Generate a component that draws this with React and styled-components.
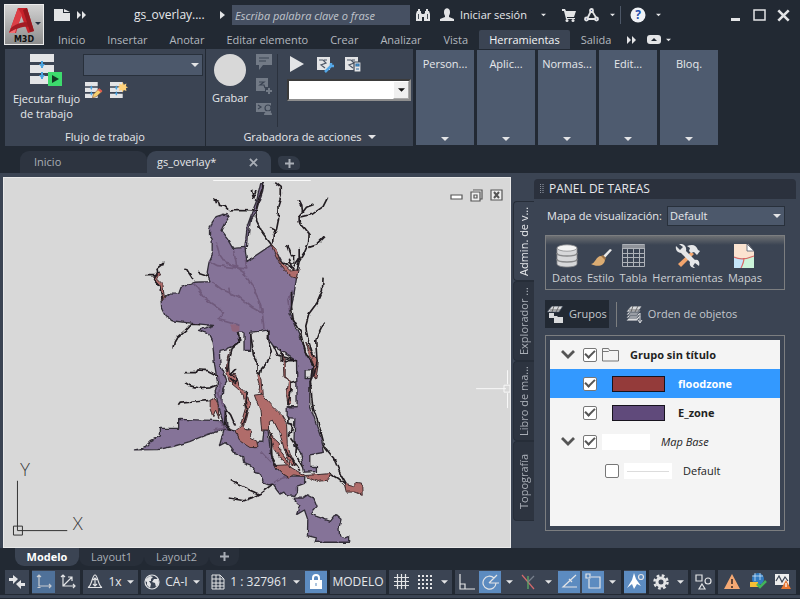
import React, { useState } from 'react';
import styled, { createGlobalStyle, css } from 'styled-components';

const GlobalStyle = createGlobalStyle`
  * {
    box-sizing: border-box;
  }
  body {
    margin: 0;
    background: #222933;
    color: #e6e8eb;
    font-family: 'Open Sans', 'Noto Sans', sans-serif;
    font-size: 11px;
    line-height: 16px;
  }
  button, input, select {
    font: inherit;
    color: inherit;
  }
  button {
    border: 0;
    padding: 0;
    background: none;
    cursor: pointer;
  }
  svg {
    display: block;
    flex: none;
  }
`;

const Window = styled.div`
  min-height: 100vh;
  display: flex;
  flex-direction: column;
`;

/* ---------- header ---------- */

const Header = styled.header`
  display: flex;
  height: 49px;
  padding-left: 4px;
`;

const AppButton = styled.button`
  width: 40px;
  height: 41px;
  margin-top: 4px;
  border: 1px solid #ececec;
  background: linear-gradient(#d2d2d2, #8d8d8d);
`;

const HeaderRows = styled.div`
  flex: 1;
  min-width: 0;
`;

const TitleBar = styled.div`
  display: flex;
  align-items: center;
  height: 30px;
  padding: 0 7px 0 8px;
`;

const IconButton = styled.button`
  display: flex;
  align-items: center;
  justify-content: center;
  height: 20px;
  min-width: ${(p) => p.$width || 20}px;
`;

const FileName = styled.span`
  width: 68px;
  margin: 0 10px 0 42px;
  font-size: 12px;
  white-space: nowrap;
`;

const Search = styled.input`
  width: 178px;
  height: 20px;
  padding: 0 3px;
  border: 0;
  background: #465062;
  font-style: italic;

  &::placeholder {
    color: #c0c5cc;
  }
`;

const SignIn = styled.button`
  display: flex;
  align-items: center;
  gap: 6px;
  margin-left: 4px;
  white-space: nowrap;
`;

const Divider = styled.span`
  width: 1px;
  height: ${(p) => p.$height || 18}px;
  background: ${(p) => p.$color || '#4d5767'};
`;

const WindowButtons = styled.div`
  display: flex;
  gap: 4px;
  margin-left: auto;
`;

const RibbonTabs = styled.nav`
  display: flex;
  align-items: center;
  height: 19px;
  padding-left: 3px;
`;

const RibbonTab = styled.button`
  height: 19px;
  padding: 0 11px;
  white-space: nowrap;
  color: #b3b8bf;

  ${(p) => p.$active && css`
    padding: 0 10px;
    border-radius: 2px 2px 0 0;
    background: #3b4453;
    color: #f4f5f6;
  `}
`;

/* ---------- ribbon ---------- */

const Ribbon = styled.div`
  display: flex;
  height: 97px;
  padding-left: 5px;
`;

const RibbonPanel = styled.section`
  display: flex;
  flex-direction: column;
  width: ${(p) => p.$width}px;
  margin-right: 1px;
  background: #3b4453;
`;

const PanelBody = styled.div`
  flex: 1;
  display: flex;
  padding: 5px 2px 0 5px;
`;

const PanelTitle = styled.div`
  display: flex;
  align-items: center;
  justify-content: center;
  gap: 6px;
  height: 19px;
`;

const BigButton = styled.button`
  display: flex;
  flex-direction: column;
  align-items: center;
  gap: 4px;
  width: ${(p) => p.$width}px;
  line-height: 15px;
`;

const Stack = styled.div`
  display: flex;
  flex-direction: column;
  gap: 5px;
`;

const MacroTools = styled(Stack)`
  margin-left: 9px;
`;

const Row = styled.div`
  display: flex;
  align-items: center;
  gap: ${(p) => p.$gap || 4}px;
`;

const SelectWrap = styled.label`
  display: flex;
  align-items: center;
  width: ${(p) => p.$width}px;
  height: ${(p) => p.$height || 22}px;
  border: 1px solid #28303b;
  background: #4c586b;

  ${(p) => p.$light && css`
    border: 2px inset #8f8f8f;
    background: #fff;
    color: #111;
  `}

  select {
    flex: 1;
    height: 100%;
    min-width: 0;
    padding: 0 2px;
    border: 0;
    appearance: none;
    background: transparent;
  }

  svg {
    margin-right: 3px;
  }
`;

const ComboArrow = styled.span`
  display: flex;
  align-items: center;
  justify-content: center;
  width: 16px;
  height: 100%;
  border: 1px outset #fff;
  background: #f0f0f0;

  svg {
    margin: 0;
  }
`;

const SideTools = styled.div`
  display: flex;
  flex-direction: column;
  align-items: flex-start;
  gap: 8px;
  width: 29px;
  height: 73px;
  padding-left: 7px;
  border-right: 1px solid #2b323e;
`;

const CollapsedPanel = styled.button`
  display: flex;
  flex-direction: column;
  align-items: center;
  justify-content: space-between;
  width: 58px;
  margin: 1px 1px 1px 2px;
  padding: 6px 0 4px;
  background: #4e5b6f;
`;

/* ---------- document tabs ---------- */

const DocTabs = styled.div`
  display: flex;
  align-items: flex-end;
  height: 31px;
  padding-left: 20px;
  border-bottom: 4px solid #3b4453;
`;

const DocTab = styled.div`
  display: flex;
  align-items: center;
  justify-content: space-between;
  width: ${(p) => p.$width}px;
  height: 22px;
  padding: 0 13px 0 ${(p) => (p.$active ? 10 : 14)}px;
  border-radius: 9px 9px 0 0;
  background: ${(p) => (p.$active ? '#3b4453' : '#2d3440')};
  color: ${(p) => (p.$active ? '#e6e8eb' : '#a9aeb6')};
`;

const NewTab = styled.button`
  display: flex;
  align-items: center;
  justify-content: center;
  width: 22px;
  height: 14px;
  margin: 0 0 3px 7px;
  border-radius: 4px 8px 4px 8px;
  background: #323a47;
`;

/* ---------- drawing area ---------- */

const Workspace = styled.main`
  flex: 1;
  display: flex;
  min-height: 370px;
  padding-left: 3px;
  background: #3b4453;
`;

const Drawing = styled.div`
  flex: 1;
  min-width: 0;
  position: relative;
  border: 1px solid #e9e9e9;
  background: #d8d8d8;

  > svg {
    width: 100%;
    height: 100%;
  }
`;

const DrawingButtons = styled.div`
  position: absolute;
  top: 7px;
  right: 4px;
  display: flex;
`;

/* ---------- task panel ---------- */

const Palette = styled.aside`
  display: flex;
  width: 289px;
  padding: 2px 4px 0 2px;
`;

const SideTabs = styled.div`
  display: flex;
  flex-direction: column;
  width: 21px;
  padding-top: 22px;
`;

const SideTab = styled.button`
  height: 80px;
  border: 1px solid #262d38;
  border-left-width: 0;
  border-radius: 0 4px 4px 0;
  background: ${(p) => (p.$active ? '#3b4453' : '#2d3440')};
  color: ${(p) => (p.$active ? '#e6e8eb' : '#a9aeb6')};
  line-height: 18px;
  writing-mode: vertical-rl;
  transform: rotate(180deg);
  white-space: nowrap;
`;

const PaletteMain = styled.div`
  flex: 1;
  min-width: 0;
`;

const PaletteTitle = styled.h2`
  display: flex;
  align-items: center;
  gap: 5px;
  height: 20px;
  margin: 0;
  padding-left: 6px;
  border-radius: 4px 4px 0 0;
  background: #2b313d;
  font-size: 12px;
  font-weight: 400;
`;

const PaletteBody = styled.div`
  display: flex;
  flex-direction: column;
  padding: 7px 11px 0;
`;

const MapField = styled.div`
  display: flex;
  align-items: center;
  justify-content: space-between;
  padding-left: 2px;
  white-space: nowrap;
`;

const ToolBox = styled.div`
  display: flex;
  justify-content: space-between;
  height: 55px;
  margin-top: 9px;
  padding: 8px 22px 0 6px;
  border: 1px solid #7c7e80;
  background: linear-gradient(#6d7073, #3b4453 9px);
`;

const Tool = styled.button`
  display: flex;
  flex-direction: column;
  align-items: center;
  gap: 2px;
  color: #cdd0d4;
`;

const ModeRow = styled.div`
  display: flex;
  align-items: center;
  gap: 7px;
  height: 28px;
  margin-top: 10px;
`;

const ModeButton = styled.button`
  display: flex;
  align-items: center;
  gap: 5px;
  height: 28px;
  padding: 0 2px;
  background: ${(p) => (p.$active ? '#222933' : 'transparent')};
  color: #c4c8cd;
  white-space: nowrap;
`;

const LayerFrame = styled.div`
  height: 196px;
  margin-top: 7px;
  padding: 4px;
  border: 1px solid #7c7e80;
`;

const LayerList = styled.ul`
  height: 100%;
  margin: 0;
  padding: 0;
  list-style: none;
  background: #f4f4f4;
  color: #222;
`;

const LayerItem = styled.li`
  display: flex;
  align-items: center;
  height: 29px;
  padding-left: ${(p) => p.$indent || 11}px;
  background: ${(p) => (p.$selected ? '#3399ff' : 'transparent')};
  color: ${(p) => (p.$selected ? '#fff' : '#222')};

  label {
    margin-left: ${(p) => p.$gap || 11}px;
    font-weight: ${(p) => (p.$bold ? 700 : 400)};
    font-style: ${(p) => (p.$italic ? 'italic' : 'normal')};
  }
`;

const Check = styled.input`
  appearance: none;
  display: grid;
  place-items: center;
  flex: none;
  width: 14px;
  height: 14px;
  margin: 0;
  border: 1px solid #777;
  border-radius: 2px;
  background: #fff;

  &:checked::after {
    content: '';
    width: 8px;
    height: 4px;
    margin-bottom: 3px;
    border: solid #555;
    border-width: 0 0 2px 2px;
    transform: rotate(-45deg);
  }
`;

const Twisty = styled.button`
  display: flex;
  width: 22px;
`;

const Folder = styled.span`
  margin-left: 5px;
`;

const Swatch = styled.span`
  width: ${(p) => p.$width || 53}px;
  height: 16px;
  margin-left: ${(p) => p.$offset || 15}px;
  border: ${(p) => (p.$plain ? '0' : '1px solid #17131d')};
  background: ${(p) => p.$color};
`;

const LineSample = styled.hr`
  width: 42px;
  margin: 8px auto;
  border: 0;
  border-top: 1px solid #dcdcdc;
`;

/* ---------- bottom bars ---------- */

const LayoutTabs = styled.div`
  display: flex;
  align-items: flex-start;
  height: 22px;
  padding-left: 15px;
`;

const LayoutTab = styled.button`
  display: flex;
  align-items: center;
  justify-content: center;
  height: 18px;
  width: ${(p) => p.$width}px;
  border-radius: 0 0 9px 9px;
  background: ${(p) => (p.$active ? '#3b4453' : '#282f3a')};
  color: ${(p) => (p.$active ? '#fff' : '#a9aeb6')};
  font-weight: ${(p) => (p.$active ? 700 : 400)};
`;

const StatusBar = styled.footer`
  display: flex;
  gap: 3px;
  height: 30px;
  padding: 0 4px 6px 5px;
  background: linear-gradient(#222933 25px, #3b4453 25px, #3b4453 28px, #222933 28px);
`;

const StatusGroup = styled.div`
  display: flex;
  align-items: center;
  height: 24px;
  background: #3b4453;
  ${(p) => p.$last && 'flex: 1;'}
`;

const StatusButton = styled.button`
  display: flex;
  flex: none;
  align-items: center;
  justify-content: center;
  gap: 5px;
  height: 22px;
  width: ${(p) => p.$width || 24}px;
  margin-left: ${(p) => (p.$spaced ? 2 : 0)}px;
  background: ${(p) => (p.$on ? '#5c8bc0' : p.$dim ? '#4f7199' : 'transparent')};
  font-size: 12px;
  white-space: nowrap;
`;

/* ---------- icons ---------- */

const light = '#e3e4e6';

const Svg = ({ w = 16, h = w, vb, children, ...rest }) => (
  <svg
    width={w}
    height={h}
    viewBox={vb || `0 0 ${w} ${h}`}
    fill="none"
    stroke={light}
    strokeWidth="1.2"
    aria-hidden="true"
    {...rest}
  >
    {children}
  </svg>
);

const Caret = ({ w = 7, color = light }) => (
  <Svg w={w} h={4} vb="0 0 8 4" stroke="none">
    <path d="M0 0h8L4 4z" fill={color} />
  </Svg>
);

const DoubleArrow = () => (
  <Svg w={10} h={8} stroke="none" fill={light}>
    <path d="M0 0l4 4-4 4zM5 0l4 4-4 4z" />
  </Svg>
);

const Plus = () => (
  <Svg w={9} stroke="#a9aeb6" strokeWidth="2"><path d="M4.5 0v9M0 4.5h9" /></Svg>
);

const LogoIcon = () => (
  <svg width="38" height="39" viewBox="0 0 38 39">
    <path d="M4 28L13 3h9l7 23-6 2-7-18-5 18z" fill="#c8222b" />
    <path d="M13 3l4 7-7 18-6 0z" fill="#dc3f46" />
    <path d="M4 28c9-6 16-7 22-6l-1-4c-7-2-14 1-19 5z" fill="#a31c24" />
    <path d="M18 5l4-2 7 23-4 1z" fill="#98181f" />
    <path d="M5 27l6-3-1 4-6 0z" fill="#f07073" />
    <path d="M30 17h6l-3 3z" fill="#243040" />
    <text x="19" y="37" textAnchor="middle" fontSize="8" fontWeight="700" fontFamily="DejaVu Sans, sans-serif" fill="#111">M3D</text>
  </svg>
);

const NewDocIcon = () => (
  <Svg w={17} h={13} stroke="none" fill={light}>
    <path d="M0 0h9v4h7v8H0z" /><path d="M10 0l6 3h-6z" />
  </Svg>
);

const BinocularsIcon = () => (
  <Svg w={16} h={14} stroke="none" fill={light}>
    <path d="M2 3h4v2l1 1v7H1V6zM10 3h4l1 3v7H9V6l1-1zM7 6h2v3H7z" />
    <path d="M3 1h2v2H3zM11 1h2v2h-2z" />
    <path d="M3.500 6v5M12.500 6v5" stroke="#222933" strokeWidth=".8" />
  </Svg>
);

const UserIcon = () => (
  <Svg w={14} stroke="none" fill={light}>
    <path d="M4 4c0-5 6-5 6 0 0 3-1 3-1 4v1l5 2v2H0v-2l5-2V8C5 7 4 7 4 4z" />
  </Svg>
);

const CartIcon = () => (
  <Svg w={15} h={14} stroke="none" fill={light}>
    <path d="M0 1h3l1 2h10l-2 6H5v1h8v1H4L2 3H0z" />
    <circle cx="5" cy="12.500" r="1.500" /><circle cx="11" cy="12.500" r="1.500" />
  </Svg>
);

const ExchangeIcon = () => (
  <Svg w={15} h={14} strokeWidth="1.800">
    <path d="M7.500 2L3 11h10z" />
    <circle cx="7.500" cy="2.500" r="1.500" fill="#3e4c91" />
    <circle cx="2.500" cy="11" r="1.500" fill="#3e4c91" />
    <circle cx="12.500" cy="11" r="1.500" fill="#3e4c91" />
  </Svg>
);

const HelpIcon = () => (
  <svg width="16" height="16" viewBox="0 0 16 16">
    <circle cx="8" cy="8" r="7.500" fill="#f0f2f6" />
    <text x="8" y="12" textAnchor="middle" fontSize="12" fontWeight="700" fill="#1f4fb0">?</text>
  </svg>
);

const Bars = ({ fill = light }) => (
  <>
    <g fill={fill} stroke="none"><path d="M0 0h24v8H0zM0 11h24v8H0zM0 22h24v8H0z" /></g>
    <path d="M12 7v7M12 18v7" stroke="#4aa3df" strokeWidth="2" />
    <path d="M9 10h6l-3 4zM9 21h6l-3 4z" fill="#4aa3df" stroke="none" />
  </>
);

const WorkflowIcon = () => (
  <Svg w={33} h={33}>
    <Bars />
    <path d="M18 18h14v14H18z" fill="#3ddc6d" stroke="none" />
    <path d="M22 21l7 4-7 4z" fill="#123b25" stroke="none" />
  </Svg>
);

const WorkflowEditIcon = () => (
  <Svg w={18} h={18} vb="0 0 34 34">
    <Bars />
    <path d="M14 30l2-7 10-10 6 5-11 10z" fill="#f4cf6f" stroke="#8a5a3b" />
    <path d="M24 15l3-3 6 5-3 3z" fill="#e25d4e" stroke="none" />
  </Svg>
);

const WorkflowNewIcon = () => (
  <Svg w={18} h={18} vb="0 0 34 34">
    <Bars />
    <path d="M24 0l2 5 5-2-1 5 4 2-4 2 1 5-5-2-2 5-2-5-5 2 1-5-4-2 4-2-1-5 5 2z" fill="#ffd27a" stroke="none" />
  </Svg>
);

const RecordIcon = () => (
  <Svg w={32} stroke="none"><circle cx="16" cy="16" r="16" fill="#d8d8d8" /></Svg>
);

const MessageIcon = () => (
  <Svg w={17} h={16} stroke="none" fill="#727a86">
    <path d="M0 0h16v11H7l-4 5v-5H0z" /><path d="M3 4h10M3 7h7" stroke="#3b4453" />
  </Svg>
);

const ScriptAddIcon = () => (
  <Svg w={17} stroke="none" fill="#727a86">
    <path d="M0 0h12v9h-3v4H0zM10 12h6v2h-6z" /><path d="M12 10h2v6h-2z" />
    <path d="M3 4h5l-4 3h4l1 3" stroke="#3b4453" />
  </Svg>
);

const UserInputIcon = () => (
  <Svg w={17} h={12} stroke="none" fill="#727a86">
    <path d="M0 0h15v9H0z" /><path d="M2 2l3 2-3 2" stroke="#3b4453" />
    <circle cx="12" cy="5" r="3" stroke="#3b4453" /><path d="M8 12c0-5 8-5 8 0z" />
  </Svg>
);

const PlayIcon = () => (
  <Svg w={15} h={16} stroke="none"><path d="M0 0l14 8-14 8z" fill={light} /></Svg>
);

const ScriptIcon = ({ tool }) => (
  <Svg w={17} h={17}>
    <path d="M0 1h13v13H0z" fill={light} stroke="none" />
    <path d="M2 4h4l3 3-5 2 4 3M7 4h3" stroke="#4d5767" />
    {tool === 'wrench' ? (
      <path d="M8 16l6-6m0-3v3h3" stroke="#55a8e8" strokeWidth="2.500" />
    ) : (
      <>
        <path d="M9 6h7v10H9z" fill={light} stroke="#3b4453" />
        <path d="M11 8h3v2h-3zM11 13h3" fill="#4aa3df" stroke="#356fa3" />
      </>
    )}
  </Svg>
);

const DatabaseIcon = () => (
  <Svg w={22} h={24} stroke="#88898b" strokeWidth=".8">
    <path d="M1 4v16c0 4 20 4 20 0V4z" fill="#d7d8da" />
    <ellipse cx="11" cy="4" rx="10" ry="3.200" fill="#f4f4f4" />
    <path d="M1 9c0 4 20 4 20 0M1 15c0 4 20 4 20 0" strokeWidth="1.500" />
  </Svg>
);

const BrushIcon = () => (
  <Svg w={22} h={24} stroke="none">
    <path d="M12 13l8-8 2 1-8 9z" fill="#e9e9e9" />
    <path d="M1 20c5-1 5-9 11-8l3 3c0 8-9 8-14 5z" fill="#dbac72" />
    <path d="M11 12l2-1 3 3-1 2z" fill="#9b7347" />
  </Svg>
);

const TableIcon = () => (
  <Svg w={23} h={24} stroke="#aeb2b8" strokeWidth="1">
    <path d="M.5.5h22v22H.5z" /><path d="M0 1h23v3H0z" fill="#8e9299" stroke="none" />
    <path d="M0 4.500h23M0 9.500h23M0 13.500h23M0 18.500h23M5.500 5v18M11.500 5v18M17.500 5v18" />
  </Svg>
);

const ToolsIcon = () => (
  <Svg w={26} h={24} stroke="none">
    <path d="M3 20L16 8l3 2L6 23z" fill="#f3a56d" />
    <path d="M12 2c6-2 9-1 11 4l2 1-3 4-3-3-3 1-2-2 1-3z" fill="#e5e6e8" />
    <path d="M1 2l4 4 3-3-4-3c5-1 8 3 7 7l9 9c4-1 5 3 4 6l-4-3-2 3 2 2c-4 0-6-3-5-6l-9-9C3 9 0 6 1 2z" fill="#e5e6e8" />
  </Svg>
);

const MapsIcon = () => (
  <Svg w={21} h={24} stroke="none">
    <path d="M0 0h14l6 7v17H0z" fill="#fbe3d0" />
    <path d="M0 14h9v10H0z" fill="#c4e5fa" /><path d="M11 14l9-1v11H8z" fill="#ccf4d9" />
    <path d="M0 13c6 3 13 2 20-1M10 14c0 4-1 6-3 10" stroke="#d76a66" fill="none" />
    <path d="M13 0l7 7h-7z" fill="#fff" stroke="#4d5767" strokeWidth=".8" />
  </Svg>
);

const LayersIcon = ({ variant }) => (
  <Svg w={17} h={17} stroke="#3b4453" strokeWidth=".8" fill="#d9dadc">
    {variant === 'order' && <path d="M0 15l4-5h11l-4 5zM0 12l4-5h11l-4 5zM0 9l4-5h11l-4 5z" />}
    <path d="M0 6l5-6h11l-4 6z" />
    <path d="M3 4h10M7 0L5 6M12 0l-3 6" stroke="#555" />
    {variant === 'order' ? (
      <path d="M14 7v9M12 14l2 3 2-3" stroke="#fff" fill="none" />
    ) : (
      <path d="M2 7h5v3h3l1 1h5v6H7v-5H2z" stroke="none" />
    )}
  </Svg>
);

const Chevron = () => (
  <Svg w={14} h={9} stroke="#555" strokeWidth="2.800"><path d="M1 1l6 6 6-6" /></Svg>
);

const FolderIcon = () => (
  <Svg w={17} h={14} stroke="#777" strokeWidth="1">
    <path d="M.5 13V.5h6l1 2h9V13zM.5 3.500h6l1-1" />
  </Svg>
);

const Close = ({ w = 9, color = light }) => (
  <Svg w={w} vb="0 0 10 10" stroke={color} strokeWidth="2"><path d="M1 1l8 8M9 1L1 9" /></Svg>
);

/* ---------- map ---------- */

// map coordinates are three units per drawing pixel
const zones = [
  'M300 120L282 115L258 122L246 140L238 162L238 178L246 190L246 240L236 262L231 290L240 318L190 320L152 336L145 355L115 356L92 374L94 400L104 420L125 436L180 443L250 450L205 465L235 475L246 498L250 530L252 560L257 590L262 620L255 650L264 690L276 730L282 762L292 762L285 700L275 680L278 640L290 620L280 590L270 570L268 540L270 525L292 520L322 508L330 495L324 470L342 470L342 525L362 525L362 470L390 468L412 464L416 492L430 512L500 557L502 695L472 695L472 728L495 730L492 810L512 830L524 892L560 890L560 875L540 875L540 840L584 832L574 790L554 730L540 690L540 620L550 600L548 560L530 540L518 500L496 450L480 410L490 370L500 308L462 272L440 230L425 207L350 258L345 215L308 218L292 190L272 165L284 142Z',
  'M12 825L40 820L62 797L90 783L90 760L145 760L145 733L275 737L284 762L220 783L178 800L130 814L82 824Z',
  'M282 762L318 768L332 796L372 818L384 802L398 802L402 764L414 766L422 835L438 878L470 904L525 904L524 926L500 935L500 952L492 965L470 963L462 952L450 958L440 945L428 928L416 930L400 924L396 910L390 896L370 892L372 880L360 870L340 862L338 846L325 836L312 832L300 815L285 803L268 812Z',
  'M490 970L520 970L534 960L552 970L562 995L542 1018L560 1025L602 1040L618 1020L634 1034L628 1060L630 1084L650 1090L660 1085L660 1103L556 1103L560 1090L533 1083L534 1035L524 1006L500 1020L510 990Z',
  'M392 20L402 20L398 45L388 75L378 108L362 130L356 165L352 215L344 215L352 150L368 105L378 80Z',
];

const floods = [
  'M423 206L438 220L450 256L482 286L508 282L502 308L488 304L462 282L444 252L432 228Z',
  'M92 296L76 292L68 312L88 330L94 372L102 370L98 330L78 310Z',
  'M300 522L294 550L298 592L320 596L326 632L352 660L360 690L350 730L342 755L332 748L346 700L340 660L322 640L298 620L288 590L292 545Z',
  'M340 748L318 770L332 800L360 818L384 818L380 798L362 790L362 764L346 765Z',
  'M373 660L395 657L420 685L455 720L470 745L472 805L482 838L500 875L480 865L462 820L450 775L430 735L415 740L416 765L395 765L390 705Z',
  'M418 768L432 790L448 805L450 830L470 855L484 880L455 855L430 820Z',
  'M434 872L470 870L504 890L526 902L560 900L606 896L592 916L562 920L530 906L490 900L478 908L456 895Z',
  'M644 928L670 935L682 923L696 925L698 962L676 952L650 952Z',
  'M452 535L460 560L462 600L476 620L470 660L474 690L482 688L482 622L466 600L466 550Z',
  'M528 500L540 540L552 570L550 600L558 612L566 560L546 530Z',
  'M240 672L252 668L264 690L266 728L256 705L248 725L240 702Z',
  'M384 590L396 612L400 660L386 652L390 625L384 605Z',
];

const rivers = [
  'M378 105L320 104L298 105L285 92L265 88L262 76L252 72L256 82',
  'M398 20L398 36L386 66L378 105L380 135L398 172L424 206',
  'M364 42L370 66L378 45',
  'M436 20L454 34L454 60L444 92L446 130L440 160L430 180L428 205M430 180L436 160L420 152',
  'M508 72L516 88L518 110L508 122L508 138L526 158L538 174L536 202L522 235L508 258L502 285M518 110L530 94L552 86M508 124L548 115L580 92L594 64M538 215L560 208L584 184M508 216L508 250L492 272',
  'M470 208L482 240L494 240L494 262L478 262L476 248L484 270L492 282L470 265L455 262',
  'M100 262L80 278L82 292L70 312L88 335L96 370M45 300L82 300M100 262L96 270',
  'M166 276L176 292L188 310M204 290L222 296L234 302',
  'M182 446L164 466L140 486L132 500L128 520M182 446L210 448',
  'M580 306L578 345L562 382L538 414L528 452L534 490L552 545',
  'M584 438L566 474L558 496L562 560L552 600',
  'M485 345L485 395L490 430L512 468L526 528L550 570L542 620L548 690L570 758L586 818L612 850L634 902L650 930',
  'M600 896L625 912L646 930',
  'M164 592L195 592L200 584L232 586L260 600M164 622L180 632L214 640L240 638L258 630M144 692L150 684L200 680L240 676',
  'M300 916L324 930L350 942L386 958M296 970L342 978L368 968L394 954L428 928',
  'M322 470L328 500L306 520L298 550L292 590M362 475L370 536L382 560L380 592L390 600L395 580L412 562L424 528L412 490L414 465',
  'M430 512L444 540L500 556M454 520L454 560M502 556L464 556',
  'M318 580L302 595L324 608L316 625L300 608',
  'M286 700L302 720L316 752M286 705L284 745L300 764L312 768',
  'M352 650L346 690L354 705L340 748M346 762L358 762',
  'M422 775L426 845L440 872M466 822L480 845L510 888',
  'M474 728L474 745L488 748L486 770L474 785M482 790L500 815L498 840L520 880M482 625L500 620M474 690L484 640',
];

const faint = [
  'M258 200L268 236L286 262L320 272L310 222M236 256L262 270L350 280L346 255',
  'M190 322L220 366L270 400L280 415L264 432L328 450',
  'M246 320L276 342L326 364L366 396L394 412L388 376L366 330L340 290L310 270M296 336L300 356M388 376L396 402L402 462',
  'M488 350L474 372L480 410M264 600L270 630L266 660L278 690M294 768L270 740M250 765L284 760M430 925L450 912L480 905M395 830L425 862',
];

const Drawings = () => (
  <svg viewBox="3 177 508 370" preserveAspectRatio="xMidYMid meet" role="img" aria-label="gs_overlay">
    <defs>
      <filter id="rough" x="-5%" y="-5%" width="110%" height="110%">
        <feTurbulence type="fractalNoise" baseFrequency="0.14" numOctaves="2" seed="4" />
        <feDisplacementMap in="SourceGraphic" scale="4" xChannelSelector="R" yChannelSelector="G" />
      </filter>
    </defs>
    <g filter="url(#rough)">
      <g transform="translate(130 175) scale(.33333)" strokeLinejoin="round">
        <g fill="#857398" stroke="#332e39" strokeWidth="4">
          {zones.map((d) => <path key={d} d={d} />)}
        </g>
        <path d="M300 450L328 448L328 466L318 470L306 466Z" fill="#90657d" />
        <g fill="none" stroke="#6f5a7c" strokeWidth="5">
          {faint.map((d) => <path key={d} d={d} />)}
        </g>
        <path d="M526 584h20v26h-20z" fill="#d8d8d8" stroke="#332e39" strokeWidth="4" />
        <g fill="#b06c6b" stroke="#3d2b2d" strokeWidth="3">
          {floods.map((d) => <path key={d} d={d} />)}
        </g>
        <g fill="none" stroke="#241f22" strokeWidth="5">
          {rivers.map((d) => <path key={d} d={d} />)}
        </g>
      </g>
    </g>
    <path d="M16.500 481v50h50M12.500 526.500h9v9h-9z" stroke="#333" fill="none" />
    <g fill="#333" fontSize="17" fontFamily="Lato, sans-serif" fontWeight="300" textAnchor="middle">
      <text x="24" y="476">Y</text>
      <text x="77" y="530">X</text>
    </g>
    <path d="M213 179.500h98M477 388.500h30M508.500 370v14M508.500 393v15M505 385h6v7h-6z" stroke="#f8f8f8" fill="none" />
  </svg>
);

const menus = ['Inicio', 'Insertar', 'Anotar', 'Editar elemento', 'Crear', 'Analizar', 'Vista', 'Herramientas', 'Salida'];
const collapsed = ['Person...', 'Aplic...', 'Normas...', 'Edit...', 'Bloq.'];
const sideTabs = ['Admin. de v...', 'Explorador ...', 'Libro de ma...', 'Topografía'];

const App = () => {
  const [menu, setMenu] = useState('Herramientas');
  const [sideTab, setSideTab] = useState(sideTabs[0]);

  return (
    <>
      <GlobalStyle />
      <Window>
        <Header>
          <AppButton aria-label="Menú de la aplicación"><LogoIcon /></AppButton>
          <HeaderRows>
            <TitleBar>
              <IconButton aria-label="Nuevo"><NewDocIcon /></IconButton>
              <IconButton aria-label="Más herramientas"><DoubleArrow /></IconButton>
              <FileName>gs_overlay....</FileName>
              <IconButton aria-label="Expandir">
                <Svg w={5} h={8} stroke="none"><path d="M0 0l5 4-5 4z" fill={light} /></Svg>
              </IconButton>
              <Search aria-label="Buscar" placeholder="Escriba palabra clave o frase" />
              <IconButton $width={26} aria-label="Búsqueda"><BinocularsIcon /></IconButton>
              <SignIn><UserIcon />Iniciar sesión</SignIn>
              <IconButton $width={34} aria-label="Opciones de sesión"><Caret w={5} /></IconButton>
              <IconButton $width={17} aria-label="Tienda"><CartIcon /></IconButton>
              <IconButton $width={28} aria-label="Intercambio"><ExchangeIcon /></IconButton>
              <IconButton $width={14} aria-label="Opciones de intercambio"><Caret w={5} /></IconButton>
              <Divider />
              <IconButton $width={34} aria-label="Ayuda"><HelpIcon /></IconButton>
              <IconButton $width={8} aria-label="Opciones de ayuda"><Caret w={5} /></IconButton>
              <WindowButtons>
                <IconButton aria-label="Minimizar">
                  <Svg w={9} h={12} strokeWidth="3"><path d="M0 10.500h9" /></Svg>
                </IconButton>
                <IconButton aria-label="Maximizar">
                  <Svg w={13} h={12} strokeWidth="1.500"><path d="M1 1h11v10H1z" /></Svg>
                </IconButton>
                <IconButton aria-label="Cerrar"><Close w={13} /></IconButton>
              </WindowButtons>
            </TitleBar>
            <RibbonTabs>
              {menus.map((name) => (
                <RibbonTab key={name} $active={name === menu} onClick={() => setMenu(name)}>{name}</RibbonTab>
              ))}
              <IconButton aria-label="Más fichas"><DoubleArrow /></IconButton>
              <IconButton $width={24} aria-label="Minimizar cinta">
                <Svg w={14} h={9} stroke="none">
                  <rect width="14" height="9" rx="3" fill={light} /><path d="M4 6l3-3 3 3z" fill="#222933" />
                </Svg>
              </IconButton>
              <Caret w={5} />
            </RibbonTabs>
          </HeaderRows>
        </Header>

        <Ribbon>
          <RibbonPanel $width={200}>
            <PanelBody>
              <BigButton $width={73}>
                <WorkflowIcon />
                <span>Ejecutar flujo<br />de trabajo</span>
              </BigButton>
              <Stack>
                <SelectWrap $width={120}>
                  <select aria-label="Flujo de trabajo"><option> </option></select>
                  <Caret w={8} />
                </SelectWrap>
                <Row>
                  <IconButton $width={22} aria-label="Editar flujo"><WorkflowEditIcon /></IconButton>
                  <IconButton aria-label="Nuevo flujo"><WorkflowNewIcon /></IconButton>
                </Row>
              </Stack>
            </PanelBody>
            <PanelTitle>Flujo de trabajo</PanelTitle>
          </RibbonPanel>

          <RibbonPanel $width={207}>
            <PanelBody>
              <BigButton $width={38}><RecordIcon />Grabar</BigButton>
              <SideTools>
                <MessageIcon />
                <ScriptAddIcon />
                <UserInputIcon />
              </SideTools>
              <MacroTools>
                <Row $gap={8}>
                  <IconButton aria-label="Reproducir"><PlayIcon /></IconButton>
                  <IconButton aria-label="Preferencias"><ScriptIcon tool="wrench" /></IconButton>
                  <IconButton aria-label="Administrar macros"><ScriptIcon tool="manager" /></IconButton>
                </Row>
                <SelectWrap $width={124} $light>
                  <select aria-label="Macro"><option> </option></select>
                  <ComboArrow><Caret color="#111" /></ComboArrow>
                </SelectWrap>
              </MacroTools>
            </PanelBody>
            <PanelTitle>Grabadora de acciones<Caret w={8} /></PanelTitle>
          </RibbonPanel>

          {collapsed.map((name) => (
            <CollapsedPanel key={name}>{name}<Caret w={8} /></CollapsedPanel>
          ))}
        </Ribbon>

        <DocTabs>
          <DocTab $width={127}>Inicio</DocTab>
          <DocTab $width={124} $active>
            gs_overlay*
            <button aria-label="Cerrar dibujo"><Close color="#a9aeb6" /></button>
          </DocTab>
          <NewTab aria-label="Nuevo dibujo"><Plus /></NewTab>
        </DocTabs>

        <Workspace>
          <Drawing>
            <Drawings />
            <DrawingButtons>
              <IconButton aria-label="Minimizar dibujo">
                <Svg w={13} h={12} stroke="#555"><path d="M1 6h11v4H1z" fill="#fff" /></Svg>
              </IconButton>
              <IconButton aria-label="Restaurar dibujo">
                <Svg w={13} h={13} stroke="#555"><path d="M3 1h9v9h-2M1 3h9v9H1z" fill="#eee" /><path d="M4 6h3v3H4z" /></Svg>
              </IconButton>
              <IconButton aria-label="Cerrar vista">
                <Svg w={13} h={12} stroke="#555">
                  <path d="M1 1h11v10H1z" fill="#eee" /><path d="M4 3l5 6M9 3L4 9" strokeWidth="2" />
                </Svg>
              </IconButton>
            </DrawingButtons>
          </Drawing>

          <Palette>
            <SideTabs>
              {sideTabs.map((name) => (
                <SideTab key={name} $active={name === sideTab} onClick={() => setSideTab(name)}>{name}</SideTab>
              ))}
            </SideTabs>
            <PaletteMain>
              <PaletteTitle>
                <Svg w={4} h={10} stroke="#8a919c" strokeDasharray="1 1"><path d="M.5 0v10M3 0v10" /></Svg>
                PANEL DE TAREAS
              </PaletteTitle>
              <PaletteBody>
                <MapField>
                  <label htmlFor="display-map">Mapa de visualización:</label>
                  <SelectWrap as="div" $width={118} $height={20}>
                    <select id="display-map"><option>Default</option></select>
                    <Caret w={8} />
                  </SelectWrap>
                </MapField>
                <ToolBox>
                  <Tool><DatabaseIcon />Datos</Tool>
                  <Tool><BrushIcon />Estilo</Tool>
                  <Tool><TableIcon />Tabla</Tool>
                  <Tool><ToolsIcon />Herramientas</Tool>
                  <Tool><MapsIcon />Mapas</Tool>
                </ToolBox>
                <ModeRow>
                  <ModeButton $active><LayersIcon />Grupos</ModeButton>
                  <Divider $height={25} $color="#7c7e80" />
                  <ModeButton><LayersIcon variant="order" />Orden de objetos</ModeButton>
                </ModeRow>
                <LayerFrame>
                  <LayerList>
                    <LayerItem $bold>
                      <Twisty aria-label="Contraer grupo"><Chevron /></Twisty>
                      <Check type="checkbox" id="group" defaultChecked />
                      <Folder><FolderIcon /></Folder>
                      <label htmlFor="group">Grupo sin título</label>
                    </LayerItem>
                    <LayerItem $indent={33} $gap={13} $bold $selected>
                      <Check type="checkbox" id="floodzone" defaultChecked />
                      <Swatch $color="#943b3a" />
                      <label htmlFor="floodzone">floodzone</label>
                    </LayerItem>
                    <LayerItem $indent={33} $gap={13} $bold>
                      <Check type="checkbox" id="ezone" defaultChecked />
                      <Swatch $color="#604a7b" />
                      <label htmlFor="ezone">E_zone</label>
                    </LayerItem>
                    <LayerItem $italic>
                      <Twisty aria-label="Contraer base"><Chevron /></Twisty>
                      <Check type="checkbox" id="base" defaultChecked />
                      <Swatch $plain $width={48} $offset={5} $color="#fff" />
                      <label htmlFor="base">Map Base</label>
                    </LayerItem>
                    <LayerItem $indent={55}>
                      <Check type="checkbox" id="default" />
                      <Swatch $plain $width={48} $offset={5} $color="#fff"><LineSample /></Swatch>
                      <label htmlFor="default">Default</label>
                    </LayerItem>
                  </LayerList>
                </LayerFrame>
              </PaletteBody>
            </PaletteMain>
          </Palette>
        </Workspace>

        <LayoutTabs>
          <LayoutTab $width={64} $active>Modelo</LayoutTab>
          <LayoutTab $width={65}>Layout1</LayoutTab>
          <LayoutTab $width={65}>Layout2</LayoutTab>
          <LayoutTab $width={30} aria-label="Nueva presentación"><Plus /></LayoutTab>
        </LayoutTabs>

        <StatusBar>
          <StatusGroup>
            <StatusButton aria-label="Coordenadas">
              <Svg w={16} h={14} stroke="none" fill={light}><path d="M0 3h4V0l5 4-5 5V6H0zM16 8h-4V5L7 9l5 5v-3h4z" /></Svg>
            </StatusButton>
          </StatusGroup>
          <StatusGroup>
            <StatusButton $dim $width={23} aria-label="SCP">
              <Svg w={16} h={15} stroke="#c9ccd0"><path d="M3 1v11h12M1 3l2-2 2 2M13 10l2 2-2 2M1.500 13.500h3" /></Svg>
            </StatusButton>
            <StatusButton $width={25} aria-label="SCP dinámico">
              <Svg w={16} h={15}><path d="M3 1v11h12M1 3l2-2 2 2M13 10l2 2-2 2M3 12l9-9M8 3h4v4" /></Svg>
            </StatusButton>
          </StatusGroup>
          <StatusGroup>
            <StatusButton $width={55}>
              <Svg w={16} h={15}><path d="M1 13.500h14C11 12 11 1 8 1S5 12 1 13.500zM8 4v8M6 6l2-2 2 2M6 10l2 2 2-2" /></Svg>
              1x<Caret />
            </StatusButton>
          </StatusGroup>
          <StatusGroup>
            <StatusButton $width={62}>
              <Svg w={16}>
                <circle cx="8" cy="8" r="7" />
                <path d="M2 5l4-3 3 1-2 2v2H5l2 3-1 4-3-3V8L1 7zM10 5l4 0 1 4-3 4-1-4-3-1z" fill={light} stroke="none" />
              </Svg>
              CA-I<Caret />
            </StatusButton>
          </StatusGroup>
          <StatusGroup>
            <StatusButton $width={99}>
              <Svg w={14} h={16}><path d="M1 1h8l4 4v10H1zM5 1v14M9 1v14M1 5h12M1 9h12M1 12h12" strokeWidth="1" /></Svg>
              1 : 327961<Caret />
            </StatusButton>
            <StatusButton $on $width={22} aria-label="Bloquear escala">
              <Svg w={12} h={15} stroke="none" fill="#fff">
                <path d="M0 6h12v9H0z" /><path d="M3 7V4c0-4 6-4 6 0v3" fill="none" stroke="#fff" strokeWidth="2" />
                <path d="M5.500 9h1v3h-1z" fill="#5c8bc0" />
              </Svg>
            </StatusButton>
          </StatusGroup>
          <StatusGroup><StatusButton $width={56}>MODELO</StatusButton></StatusGroup>
          <StatusGroup>
            <StatusButton aria-label="Rejilla">
              <Svg w={15}><path d="M3.500 0v15M7.500 0v15M11.500 0v15M0 3.500h15M0 7.500h15M0 11.500h15" /></Svg>
            </StatusButton>
            <StatusButton aria-label="Forzar cursor">
              <Svg w={14} strokeWidth="2" strokeDasharray="2 2"><path d="M0 1h14M0 5h14M0 9h14M0 13h14" /></Svg>
            </StatusButton>
            <StatusButton $width={15} aria-label="Opciones de rejilla"><Caret /></StatusButton>
          </StatusGroup>
          <StatusGroup>
            <StatusButton aria-label="Orto"><Svg w={16}><path d="M1 0v15h15M1 10h5v5" /></Svg></StatusButton>
            <StatusButton $on $width={22} aria-label="Rastreo polar">
              <Svg w={17} h={16}><path d="M12 4a6.500 6.500 0 1 0 2 5M7 9h10M7 9l8-8" /></Svg>
            </StatusButton>
            <StatusButton $width={17} aria-label="Opciones de rastreo"><Caret /></StatusButton>
            <StatusButton $width={20} aria-label="Isométrico">
              <Svg w={14} h={16}>
                <path d="M1 1l12 14" stroke="#d46a6c" /><path d="M7 2v13" stroke="#62b568" /><path d="M7 8l6-6" stroke="#777f8c" />
              </Svg>
            </StatusButton>
            <StatusButton $width={20} aria-label="Opciones isométricas"><Caret /></StatusButton>
            <StatusButton $on $width={22} aria-label="Rastreo de referencias">
              <Svg w={16} h={15}><path d="M15 1L2 13h14M8 5l3 3" /></Svg>
            </StatusButton>
            <StatusButton $on $spaced $width={22} aria-label="Referencia a objetos">
              <Svg w={17}><path d="M6 4h9v11H4V6M1 1h4v4H1z" /></Svg>
            </StatusButton>
            <StatusButton $width={17} aria-label="Opciones de referencia"><Caret /></StatusButton>
          </StatusGroup>
          <StatusGroup>
            <StatusButton $on $width={22} aria-label="Anotación">
              <Svg w={17}><path d="M7 0l2 6 5 7-4-2-3 5-2-5-5 4 5-8z" fill="#fff" stroke="none" /><circle cx="14" cy="4" r="2.500" /></Svg>
            </StatusButton>
          </StatusGroup>
          <StatusGroup>
            <StatusButton aria-label="Espacio de trabajo">
              <Svg w={16}>
                <circle cx="8" cy="8" r="4" strokeWidth="3" />
                <circle cx="8" cy="8" r="6.500" strokeWidth="2.500" strokeDasharray="2.700 2.400" />
              </Svg>
            </StatusButton>
            <StatusButton $width={15} aria-label="Opciones de espacio"><Caret /></StatusButton>
          </StatusGroup>
          <StatusGroup>
            <StatusButton aria-label="Aislar objetos">
              <Svg w={17} h={16}><path d="M1 1h6v6H1zM7 10l3 5H4z" /><circle cx="13" cy="7" r="3" /></Svg>
            </StatusButton>
          </StatusGroup>
          <StatusGroup $last>
            <StatusButton $width={28} aria-label="Avisos">
              <Svg w={16} stroke="none"><path d="M8 0l8 15H0z" fill="#f4a873" /><path d="M8 5v5M8 12v2" stroke="#614537" strokeWidth="2" /></Svg>
            </StatusButton>
            <StatusButton aria-label="Conexión de datos">
              <Svg w={17} stroke="none">
                <circle cx="8" cy="6" r="6" fill="#327bc0" /><path d="M0 9h8v5H0z" fill="#f5bd35" />
                <path d="M2 3h11M5 0v8M10 0v7" stroke="#c9e4fa" strokeWidth=".8" />
                <path d="M7 11l3 3 6-6" stroke="#42b45b" strokeWidth="2.500" />
              </Svg>
            </StatusButton>
            <StatusButton aria-label="Rendimiento gráfico">
              <Svg w={17} stroke="none">
                <path d="M1 1h14v11H1z" fill="#eee" /><path d="M2 8l3-5 3 6 3-5 3 4" stroke="#3b4453" />
                <path d="M12 7l5 9H7z" fill="#e87732" /><path d="M12 10v4" stroke="#fff" />
              </Svg>
            </StatusButton>
          </StatusGroup>
        </StatusBar>
      </Window>
    </>
  );
};

export default App;
